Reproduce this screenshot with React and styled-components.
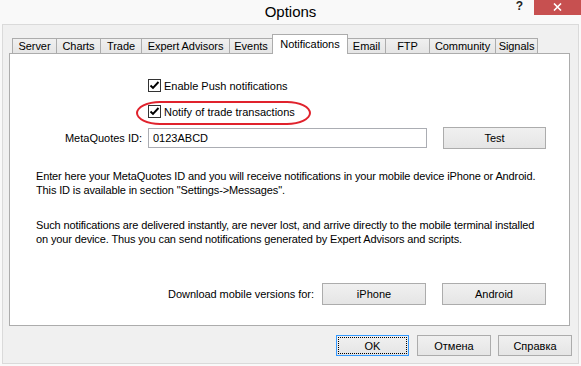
import React from "react";
import styled, { createGlobalStyle } from "styled-components";

const GlobalStyle = createGlobalStyle`
  * { box-sizing: border-box; }
  html, body {
    margin: 0;
    padding: 0;
    background: #f9f9f9;
  }
  body {
    font-family: "Liberation Sans", Arial, sans-serif;
    font-size: 11px;
    color: #000;
  }
`;

const Window = styled.div`
  width: 581px;
  height: 366px;
  overflow: hidden;
  background: #f9f9f9;
`;

const TitleBar = styled.div`
  height: 24px;
  display: grid;
  grid-template-columns: 1fr auto 1fr;
`;

const Title = styled.div`
  grid-column: 2;
  font-size: 15px;
  line-height: 24px;
  color: #000;
`;

const Controls = styled.div`
  grid-column: 3;
  justify-self: end;
  display: flex;
  align-items: flex-start;
`;

const HelpButton = styled.div`
  width: 29px;
  height: 15px;
  font-size: 12px;
  font-weight: bold;
  line-height: 12px;
  text-align: center;
  color: #222;
`;

const CloseButton = styled.div`
  width: 47px;
  height: 15px;
  background: #c75050;
  display: flex;
  align-items: center;
  justify-content: center;
  padding-bottom: 2px;
`;

const Client = styled.div`
  margin-left: 2px;
  width: 577px;
  height: 340px;
  background: #f0f0f0;
  border: 1px solid #dadada;
  padding: 9px 6px 7px 6px;
  display: flex;
  flex-direction: column;
`;

const TabRow = styled.div`
  height: 19px;
  display: flex;
  align-items: flex-end;
  padding-left: 3px;
`;

const Tab = styled.div`
  position: relative;
  z-index: ${(p) => (p.$active ? 1 : 0)};
  width: ${(p) => p.$w}px;
  height: ${(p) => (p.$active ? 20 : 15)}px;
  margin-left: ${(p) => (p.$first ? 0 : -1)}px;
  margin-bottom: ${(p) => (p.$active ? -1 : 0)}px;
  padding-bottom: ${(p) => (p.$active ? 1 : 0)}px;
  border: 1px solid #acacac;
  border-bottom: none;
  background: ${(p) => (p.$active ? "#fff" : "linear-gradient(#f0f0f0, #e5e5e5)")};
  display: flex;
  align-items: center;
  justify-content: center;
  white-space: nowrap;
  line-height: 13px;
  letter-spacing: -0.05px;
`;

const Panel = styled.div`
  position: relative;
  width: 561px;
  height: 273px;
  background: #fff;
  border: 1px solid #acacac;
  padding-top: 25px;
  display: flex;
  flex-direction: column;
`;

const CheckList = styled.div`
  display: flex;
  flex-direction: column;
  gap: 13px;
  padding-left: 138px;
`;

const CheckRow = styled.label`
  display: flex;
  align-items: center;
  gap: 3px;
  height: 13px;
  line-height: 13px;
`;

const CheckText = styled.span`
  padding-top: 2px;
`;

const Box = styled.span`
  width: 13px;
  height: 13px;
  border: 1px solid #333;
  background: #fff;
  display: flex;
  align-items: center;
  justify-content: center;
`;

const Highlight = styled.div`
  position: absolute;
  left: 126px;
  top: 47px;
  width: 175px;
  height: 24px;
  border: 2px solid #e0222c;
  border-radius: 24px / 12px;
  pointer-events: none;
`;

const MetaRow = styled.div`
  margin-top: 9px;
  height: 22px;
  display: flex;
  align-items: center;
`;

const FieldLabel = styled.span`
  width: 132px;
  margin-right: 6px;
  text-align: right;
  white-space: nowrap;
`;

const IdField = styled.input`
  width: 279px;
  height: 20px;
  border: 1px solid #abadb3;
  padding: 0 4px;
  margin: 0;
  font: inherit;
  color: #000;
  background: #fff;
  outline: none;
`;

const Button = styled.button`
  width: ${(p) => p.$w}px;
  height: ${(p) => p.$h}px;
  margin: 0;
  margin-left: ${(p) => p.$ml || 0}px;
  padding: 0;
  border: 1px solid ${(p) => (p.$default ? "#3399ff" : "#acacac")};
  background: linear-gradient(#f0f0f0, #e5e5e5);
  font: inherit;
  color: #000;
  outline: ${(p) => (p.$default ? "1px dotted #000" : "none")};
  outline-offset: -3px;
`;

const Description = styled.div`
  margin-top: 20px;
  padding-left: 26px;
  display: flex;
  flex-direction: column;
  gap: 21px;
`;

const Paragraph = styled.p`
  margin: 0;
  line-height: 14px;
  white-space: nowrap;
  letter-spacing: -0.13px;
`;

const DownloadRow = styled.div`
  margin-top: 37px;
  padding-right: 23px;
  display: flex;
  align-items: center;
  justify-content: flex-end;
  gap: 16px;
`;

const DownloadLabel = styled.span`
  margin-right: -8px;
  white-space: nowrap;
  letter-spacing: -0.05px;
`;

const Footer = styled.div`
  margin-top: 9px;
  display: flex;
  justify-content: flex-end;
  gap: 7px;
`;

const tabs = [
  { name: "Server", w: 45 },
  { name: "Charts", w: 45 },
  { name: "Trade", w: 42 },
  { name: "Expert Advisors", w: 89 },
  { name: "Events", w: 44 },
  { name: "Notifications", w: 76, active: true },
  { name: "Email", w: 39 },
  { name: "FTP", w: 45 },
  { name: "Community", w: 67 },
  { name: "Signals", w: 43 },
];

const Tick = () => (
  <svg width="11" height="11" viewBox="0 0 11 11">
    <path d="M1.5 5.5 L4 8 L9.5 2" fill="none" stroke="#000" strokeWidth="1.9" />
  </svg>
);

const Check = ({ children }) => (
  <CheckRow>
    <Box>
      <Tick />
    </Box>
    <CheckText>{children}</CheckText>
  </CheckRow>
);

const App = () => {
  return (
    <Window>
      <GlobalStyle />
      <TitleBar>
        <Title>Options</Title>
        <Controls>
          <HelpButton>?</HelpButton>
          <CloseButton>
            <svg width="9" height="8" viewBox="0 0 9 8">
              <path d="M1 0.5 L8 7.5 M8 0.5 L1 7.5" stroke="#fff" strokeWidth="1.6" />
            </svg>
          </CloseButton>
        </Controls>
      </TitleBar>

      <Client>
        <TabRow>
          {tabs.map((t, i) => (
            <Tab key={t.name} $w={t.w} $active={t.active} $first={i === 0}>
              {t.name}
            </Tab>
          ))}
        </TabRow>

        <Panel>
          <CheckList>
            <Check>Enable Push notifications</Check>
            <Check>Notify of trade transactions</Check>
          </CheckList>
          <Highlight />

          <MetaRow>
            <FieldLabel>MetaQuotes ID:</FieldLabel>
            <IdField type="text" defaultValue="0123ABCD" />
            <Button $w={103} $h={22} $ml={16}>Test</Button>
          </MetaRow>

          <Description>
            <Paragraph>
              Enter here your MetaQuotes ID and you will receive notifications in your mobile device iPhone or Android.
              <br />
              This ID is available in section "Settings-&gt;Messages".
            </Paragraph>
            <Paragraph>
              Such notifications are delivered instantly, are never lost, and arrive directly to the mobile terminal installed
              <br />
              on your device. Thus you can send notifications generated by Expert Advisors and scripts.
            </Paragraph>
          </Description>

          <DownloadRow>
            <DownloadLabel>Download mobile versions for:</DownloadLabel>
            <Button $w={104} $h={22}>iPhone</Button>
            <Button $w={104} $h={22}>Android</Button>
          </DownloadRow>
        </Panel>

        <Footer>
          <Button $w={73} $h={21} $default style={{ marginRight: 1 }}>OK</Button>
          <Button $w={74} $h={21}>Отмена</Button>
          <Button $w={74} $h={21}>Справка</Button>
        </Footer>
      </Client>
    </Window>
  );
};

export default App;
